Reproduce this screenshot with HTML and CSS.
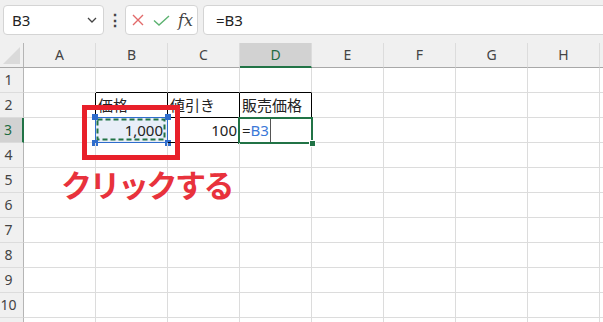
FILE: index.html
```html
<!DOCTYPE html>
<html lang="ja">
<head>
    <meta charset="UTF-8">
    <title>Excel - 参照</title>
    <link rel="stylesheet" href="styles.css">
</head>
<body>
    <div class="toolbar">
        <div class="namebox">
            <span>B3</span>
            <svg class="chevron" width="10" height="6" viewBox="0 0 10 6"><path d="M1 1 L5 5 L9 1" fill="none" stroke="#444" stroke-width="1.3"/></svg>
        </div>
        <div class="dots">⋮</div>
        <div class="fxbox">
            <svg width="12" height="12" viewBox="0 0 12 12"><path d="M1 1 L11 11 M11 1 L1 11" stroke="#e26a6a" stroke-width="1.4"/></svg>
            <svg width="17" height="11" viewBox="0 0 17 11"><path d="M1 5.5 L6 10 L16 1" fill="none" stroke="#5cb270" stroke-width="1.4"/></svg>
            <span class="fx">fx</span>
        </div>
        <div class="formula">=B3</div>
    </div>

    <div class="sheet">
        <div class="grid">
            <div class="corner"></div>
            <div class="colhead">A</div>
            <div class="colhead">B</div>
            <div class="colhead">C</div>
            <div class="colhead active">D</div>
            <div class="colhead">E</div>
            <div class="colhead">F</div>
            <div class="colhead">G</div>
            <div class="colhead">H</div>
            <div class="colhead"></div>

            <div class="rowhead">1</div>
            <div class="cell"></div><div class="cell tb-bottom"></div><div class="cell tb-bottom"></div><div class="cell tb-bottom"></div>
            <div class="cell"></div><div class="cell"></div><div class="cell"></div><div class="cell"></div><div class="cell"></div>

            <div class="rowhead">2</div>
            <div class="cell tb-right"></div>
            <div class="cell tb">価格</div>
            <div class="cell tb">値引き</div>
            <div class="cell tb">販売価格</div>
            <div class="cell"></div><div class="cell"></div><div class="cell"></div><div class="cell"></div><div class="cell"></div>

            <div class="rowhead active">3</div>
            <div class="cell tb-right"></div>
            <div class="cell tb num copied">
                <svg class="ants" width="72" height="25" viewBox="0 0 72 25"><rect x="2.5" y="2.5" width="67" height="20" fill="none" stroke="#217346" stroke-width="2" stroke-dasharray="5 3"/></svg>
                <span class="h tl"></span><span class="h tr"></span><span class="h bl"></span><span class="h br"></span>
                <span class="val">1,000</span>
            </div>
            <div class="cell tb num">100</div>
            <div class="cell tb editing"><span>=</span><span class="ref">B3</span><span class="caret"></span></div>
            <div class="cell"></div><div class="cell"></div><div class="cell"></div><div class="cell"></div><div class="cell"></div>

            <div class="rowhead">4</div>
            <div class="cell"></div><div class="cell"></div><div class="cell"></div><div class="cell"></div><div class="cell"></div><div class="cell"></div><div class="cell"></div><div class="cell"></div><div class="cell"></div>
            <div class="rowhead">5</div>
            <div class="cell"></div><div class="cell"></div><div class="cell"></div><div class="cell"></div><div class="cell"></div><div class="cell"></div><div class="cell"></div><div class="cell"></div><div class="cell"></div>
            <div class="rowhead">6</div>
            <div class="cell"></div><div class="cell"></div><div class="cell"></div><div class="cell"></div><div class="cell"></div><div class="cell"></div><div class="cell"></div><div class="cell"></div><div class="cell"></div>
            <div class="rowhead">7</div>
            <div class="cell"></div><div class="cell"></div><div class="cell"></div><div class="cell"></div><div class="cell"></div><div class="cell"></div><div class="cell"></div><div class="cell"></div><div class="cell"></div>
            <div class="rowhead">8</div>
            <div class="cell"></div><div class="cell"></div><div class="cell"></div><div class="cell"></div><div class="cell"></div><div class="cell"></div><div class="cell"></div><div class="cell"></div><div class="cell"></div>
            <div class="rowhead">9</div>
            <div class="cell"></div><div class="cell"></div><div class="cell"></div><div class="cell"></div><div class="cell"></div><div class="cell"></div><div class="cell"></div><div class="cell"></div><div class="cell"></div>
            <div class="rowhead">10</div>
            <div class="cell"></div><div class="cell"></div><div class="cell"></div><div class="cell"></div><div class="cell"></div><div class="cell"></div><div class="cell"></div><div class="cell"></div><div class="cell"></div>
            <div class="rowhead"></div>
            <div class="cell"></div><div class="cell"></div><div class="cell"></div><div class="cell"></div><div class="cell"></div><div class="cell"></div><div class="cell"></div><div class="cell"></div><div class="cell"></div>
        </div>

        <div class="callout-box"></div>
        <div class="callout-text">クリックする</div>
    </div>
</body>
</html>
```

FILE: styles.css
```css
body {
    margin: 0;
    width: 603px;
    height: 322px;
    overflow: hidden;
    background: #fff;
    font-family: "Noto Sans", "Noto Sans CJK JP", sans-serif;
    color: #222;
}

/* formula bar */
.toolbar {
    height: 43px;
    box-sizing: border-box;
    padding: 5px 0 8px 3px;
    background: #f0f0f0;
    display: flex;
    align-items: stretch;
}

.namebox,
.fxbox,
.formula {
    background: #fff;
    border: 1px solid #d4d4d4;
    border-radius: 4px;
    box-sizing: border-box;
    display: flex;
    align-items: center;
}

.namebox {
    width: 101px;
    padding: 0 6px 0 8px;
    justify-content: space-between;
    font-size: 15px;
}

.dots {
    width: 21px;
    text-align: center;
    font-size: 16px;
    line-height: 30px;
    font-weight: bold;
    color: #444;
}

.fxbox {
    width: 73px;
    padding: 0 0 0 6px;
    gap: 9px;
}

.fx {
    font-family: "DejaVu Serif", "Liberation Serif", serif;
    font-style: italic;
    font-size: 16px;
    color: #444;
    margin-left: -1px;
}

.formula {
    flex: 1;
    margin-left: 5px;
    margin-right: -10px;
    padding-left: 12px;
    font-size: 15px;
}

/* sheet */
.sheet {
    position: relative;
}

.grid {
    display: grid;
    grid-template-columns: 24px repeat(8, 72px) 1fr;
    grid-auto-rows: 25px;
}

.grid > div {
    box-sizing: border-box;
    border-right: 1px solid #dcdcdc;
    border-bottom: 1px solid #dcdcdc;
}

.corner {
    background: #f0f0f0;
    position: relative;
    border-right-color: #b5b5b5 !important;
    border-bottom-color: #a8a8a8 !important;
}

.corner::after {
    content: "";
    position: absolute;
    right: 3px;
    bottom: 3px;
    width: 0;
    height: 0;
    border-left: 17px solid transparent;
    border-bottom: 17px solid #dadada;
}

.colhead {
    background: #f0f0f0;
    border-bottom-color: #a8a8a8 !important;
    text-align: center;
    font-size: 14px;
    line-height: 24px;
    color: #444;
}

.colhead.active {
    background: #d2d2d2;
    color: #1e6b41;
    border-bottom: 2px solid #217346 !important;
}

.rowhead {
    background: #f0f0f0;
    border-right-color: #b5b5b5 !important;
    text-align: center;
    padding-right: 6px;
    font-size: 14px;
    line-height: 24px;
    color: #444;
}

.rowhead.active {
    background: #d2d2d2;
    color: #1e6b41;
    border-right: 2px solid #217346 !important;
}

.cell {
    font-family: "Noto Sans", "Noto Sans CJK JP", sans-serif;
    font-size: 15px;
    line-height: 24px;
    padding: 0 2px;
    white-space: nowrap;
    overflow: visible;
    position: relative;
}

.cell.tb-bottom {
    border-bottom-color: #000;
}

.cell.tb-right {
    border-right-color: #000;
}

.cell.tb {
    border-right-color: #000;
    border-bottom-color: #000;
}

.cell.num {
    text-align: right;
}

/* copied cell with marching ants */
.copied {
    background: #e8eef8;
    padding-right: 4px;
}

.ants {
    position: absolute;
    left: -1px;
    top: -1px;
}

.h {
    position: absolute;
    width: 6px;
    height: 6px;
    background: #2f6dcc;
}

.copied::before {
    content: "";
    position: absolute;
    left: -1px;
    top: -1px;
    right: -1px;
    bottom: -1px;
    border: 1px solid #2f6dcc;
}

.h.tl { left: -4px; top: -4px; }
.h.tr { right: -4px; top: -4px; }
.h.bl { left: -4px; bottom: -4px; }
.h.br { right: -4px; bottom: -4px; }

.val {
    position: relative;
}

/* editing cell */
.editing::after {
    content: "";
    position: absolute;
    left: -2px;
    top: -1px;
    right: -2px;
    bottom: -2px;
    border: 2px solid #217346;
}

.editing::before {
    content: "";
    position: absolute;
    right: -4px;
    bottom: -4px;
    width: 5px;
    height: 5px;
    background: #217346;
    outline: 1px solid #fff;
    z-index: 1;
}

.ref {
    color: #3b78d8;
}

.caret {
    display: inline-block;
    width: 1px;
    height: 25px;
    background: #555;
    vertical-align: top;
    margin-left: 1px;
}

/* annotation */
.callout-box {
    position: absolute;
    left: 82px;
    top: 62px;
    width: 98px;
    height: 55px;
    box-sizing: border-box;
    border: 5px solid #e8202a;
}

.callout-text {
    position: absolute;
    left: 61px;
    top: 121px;
    font-family: "Noto Sans CJK JP", sans-serif;
    font-weight: 700;
    font-size: 31px;
    letter-spacing: -2.5px;
    line-height: 40px;
    color: #e8323c;
}
```
